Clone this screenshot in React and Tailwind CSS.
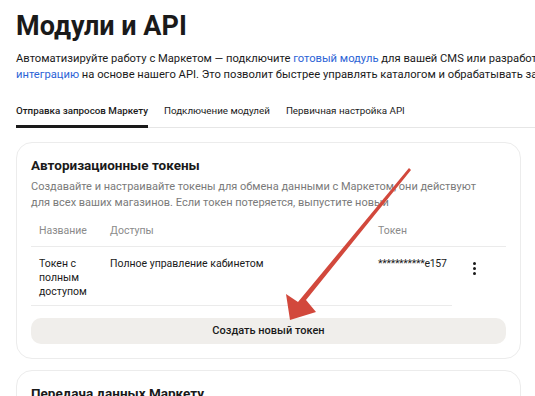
import React from "react";

function Arrow() {
  // red annotation arrow pointing at the button
  return (
    <svg
      className="absolute left-0 top-0 pointer-events-none"
      width="535"
      height="396"
      viewBox="0 0 535 396"
    >
      <path
        d="M409 168 L411 170 L306 300 L316 312 L290 320 L286 294 L298 302 Z"
        fill="#d2483c"
      />
    </svg>
  );
}

export default function App() {
  return (
    <div className="relative w-[535px] h-[396px] overflow-hidden bg-white text-[#1a1a1a] font-['Roboto',sans-serif]">
      <div className="pl-4">
        <h1 className="pt-[11px] text-[27px] leading-[30px] font-bold">
          Модули и API
        </h1>
        <p className="mt-[10px] text-[11.2px] leading-[16px] whitespace-nowrap">
          Автоматизируйте работу с Маркетом — подключите{" "}
          <span className="text-[#2c63d6]">готовый модуль</span> для вашей CMS
          или разработайте
          <br />
          <span className="text-[#2c63d6]">интеграцию</span> на основе нашего
          API. Это позволит быстрее управлять каталогом и обрабатывать заказы
        </p>
        <div className="mt-[21px] flex gap-[16px] border-b border-[#e6e6e6] text-[9.8px] leading-[14px]">
          <div className="pb-[7px] -mb-px border-b-[3px] border-[#1a1a1a] font-medium">
            Отправка запросов Маркету
          </div>
          <div className="pb-[7px]">Подключение модулей</div>
          <div className="pb-[7px]">Первичная настройка API</div>
        </div>

        <div className="mt-[14px] mr-[14px] rounded-[16px] border border-[#ececec] px-[14px] pt-[12px] pb-[14px]">
          <h2 className="text-[13.5px] leading-[20px] font-bold">
            Авторизационные токены
          </h2>
          <p className="mt-[4px] text-[11px] leading-[16px] text-[#7a7a7a] whitespace-nowrap">
            Создавайте и настраивайте токены для обмена данными с Маркетом, они
            действуют
            <br />
            для всех ваших магазинов. Если токен потеряется, выпустите новый
          </p>
          <div className="mt-[7px] text-[10.5px] leading-[14px]">
            <div className="flex border-b border-[#ebebeb] pb-[8px] pt-[6px] text-[#8a8a8a]">
              <div className="w-[79px] pl-[8px]">Название</div>
              <div className="w-[268px]">Доступы</div>
              <div>Токен</div>
            </div>
            <div className="flex items-start">
              <div className="flex w-[421px] border-b border-[#ebebeb] pt-[10px] pb-[6px]">
                <div className="w-[79px] pl-[8px]">
                  Токен с
                  <br />
                  полным
                  <br />
                  доступом
                </div>
                <div className="w-[268px]">Полное управление кабинетом</div>
                <div className="tracking-[-0.3px]">***********e157</div>
              </div>
              <div className="flex flex-col gap-[2px] pl-[21px] pt-[15px]">
                <span className="block w-[3px] h-[3px] rounded-full bg-[#1a1a1a]" />
                <span className="block w-[3px] h-[3px] rounded-full bg-[#1a1a1a]" />
                <span className="block w-[3px] h-[3px] rounded-full bg-[#1a1a1a]" />
              </div>
            </div>
          </div>
          <button className="mt-[12px] w-full h-[26px] rounded-[10px] bg-[#f0eeeb] text-[11px] font-medium">
            Создать новый токен
          </button>
        </div>

        <div className="mt-[11px] mr-[14px] rounded-[16px] border border-[#ececec] px-[14px] pt-[12px] h-[60px]">
          <h2 className="text-[13.5px] leading-[20px] font-bold">
            Передача данных Маркету
          </h2>
        </div>
      </div>
      <Arrow />
    </div>
  );
}
